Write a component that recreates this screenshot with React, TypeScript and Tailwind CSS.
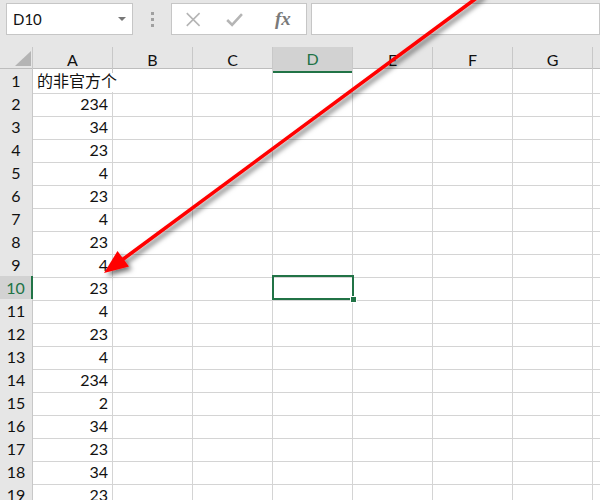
import React from "react";

const data: (string | number)[] = [
  "的非官方个", 234, 34, 23, 4, 23, 4, 23, 4, 23, 4, 23, 4, 234, 2, 34, 23, 34, 23,
];
const cols = ["A", "B", "C", "D", "E", "F", "G"];
const font = { fontFamily: "Lato, 'Noto Sans CJK SC', 'Liberation Sans', sans-serif" };

export default function App() {
  return (
    <div className="relative w-[600px] h-[500px] overflow-hidden bg-white text-[#111]" style={font}>
      {/* toolbar */}
      <div className="flex items-start h-[47px] bg-[#e6e6e6] pt-[3px] pl-[6px]">
        <div className="relative w-[127px] h-[32px] bg-white border border-[#c6c6c6] flex items-center pl-[6px] text-[15px]">
          D10
          <span className="absolute right-[6px] top-[13px] w-0 h-0 border-l-[4px] border-r-[4px] border-t-[4px] border-l-transparent border-r-transparent border-t-[#777]" />
        </div>
        <div className="w-[38px] h-[32px] flex flex-col items-center justify-center gap-[3px]">
          <span className="w-[3px] h-[3px] bg-[#a0a0a0]" />
          <span className="w-[3px] h-[3px] bg-[#a0a0a0]" />
          <span className="w-[3px] h-[3px] bg-[#a0a0a0]" />
        </div>
        <div className="w-[136px] h-[32px] bg-white border border-[#c6c6c6] flex items-center">
          <svg width="136" height="30" viewBox="0 0 136 30">
            <path d="M15 9 L28 22 M28 9 L15 22" stroke="#b5b5b5" strokeWidth="1.6" fill="none" />
            <path d="M56 16 L61 21 L71 10" stroke="#b5b5b5" strokeWidth="2.6" fill="none" />
          </svg>
          <span className="absolute left-[275px] top-[5px] text-[19px] font-bold italic text-[#7a7a7a]" style={{ fontFamily: "'Liberation Serif', serif" }}>
            fx
          </span>
        </div>
        <div className="ml-[4px] flex-1 h-[32px] bg-white border border-[#c6c6c6]" />
      </div>

      {/* column headers */}
      <div className="grid grid-cols-[33px_repeat(7,80px)_1fr] h-[22px] bg-[#e6e6e6] border-b border-[#bdbdbd] text-[16px]">
        <div className="relative border-r border-[#c8c8c8]">
          <svg className="absolute left-[15px] top-[4px]" width="16" height="15" viewBox="0 0 16 15">
            <polygon points="16,0 16,15 0,15" fill="#b4b4b4" />
          </svg>
        </div>
        {cols.map((c) =>
          c === "D" ? (
            <div key={c} className="flex items-center justify-center bg-[#d2d2d2] border-r border-[#c8c8c8] border-b-2 border-b-[#217346] text-[#217346]">
              {c}
            </div>
          ) : (
            <div key={c} className="flex items-center justify-center border-r border-[#c8c8c8]">
              {c}
            </div>
          )
        )}
        <div />
      </div>

      {/* rows */}
      {data.map((v, i) => {
        const r = i + 1;
        const sel = r === 10;
        return (
          <div key={r} className="grid grid-cols-[33px_repeat(7,80px)_1fr] h-[23px] text-[16px]">
            <div
              className={
                sel
                  ? "flex items-center justify-center bg-[#d2d2d2] border-r-2 border-r-[#217346] border-b border-[#c8c8c8] text-[#217346]"
                  : "flex items-center justify-center bg-[#e6e6e6] border-r border-b border-[#c8c8c8]"
              }
            >
              {r}
            </div>
            {r === 1 ? (
              <div className="border-b border-[#d4d4d4] flex items-center pl-[4px] whitespace-nowrap overflow-visible z-10 text-[16px]">
                {v}
              </div>
            ) : (
              <div className="border-r border-b border-[#d4d4d4] flex items-center justify-end pr-[4px]">{v}</div>
            )}
            {cols.slice(1).map((c) => (
              <div key={c} className="border-r border-b border-[#d4d4d4]" />
            ))}
            <div className="border-b border-[#d4d4d4]" />
          </div>
        );
      })}

      {/* selection */}
      <div className="absolute left-[272px] top-[275px] w-[82px] h-[25px] border-2 border-[#217346] pointer-events-none" />
      <div className="absolute left-[350px] top-[296px] w-[7px] h-[7px] bg-[#217346] border border-white pointer-events-none" />

      {/* arrow */}
      <svg className="absolute left-0 top-0 pointer-events-none" width="600" height="500" viewBox="0 0 600 500">
        <defs>
          <filter id="sh" x="-20%" y="-20%" width="140%" height="140%">
            <feDropShadow dx="3" dy="3" stdDeviation="2.5" floodColor="#000" floodOpacity="0.55" />
          </filter>
        </defs>
        <g filter="url(#sh)">
          <line x1="482" y1="-6" x2="122" y2="260" stroke="#ff0000" strokeWidth="3.5" />
          <polygon points="104,273 117.5,251 129,266.5" fill="#ff0000" />
        </g>
      </svg>
    </div>
  );
}
